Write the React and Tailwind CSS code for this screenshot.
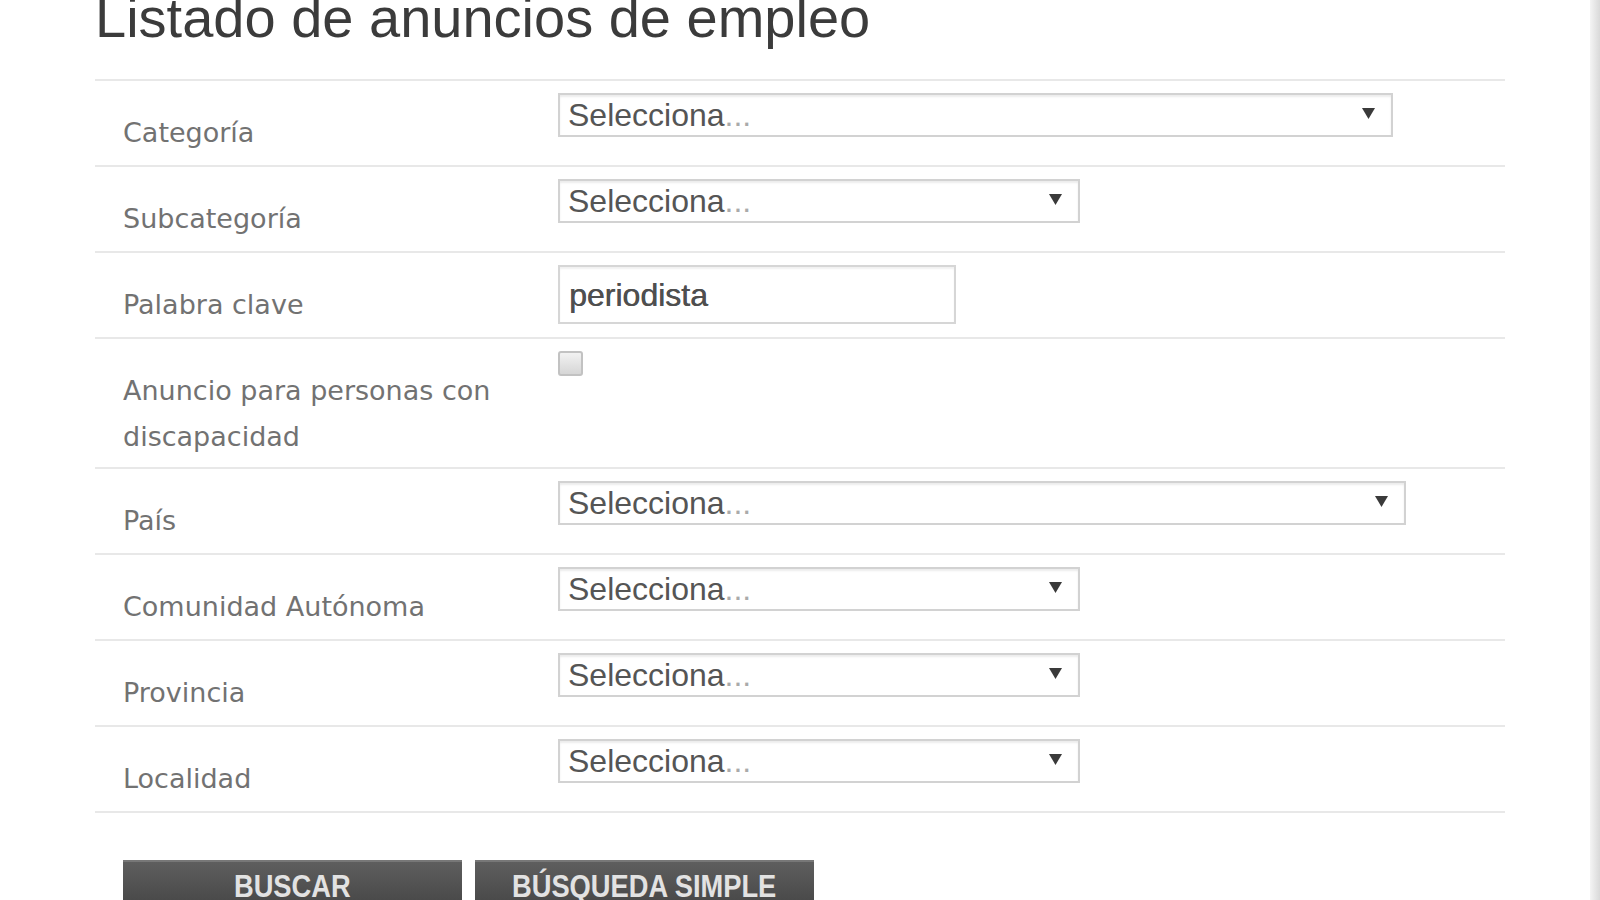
import { Fragment } from 'react'

const rows = [
    { label: 'Categoría', kind: 'select', width: 'w-[835px]' },
    { label: 'Subcategoría', kind: 'select', width: 'w-[522px]' },
    { label: 'Palabra clave', kind: 'input', width: 'w-[398px]', value: 'periodista' },
    { label: ['Anuncio para personas con', 'discapacidad'], kind: 'checkbox' },
    { label: 'País', kind: 'select', width: 'w-[848px]' },
    { label: 'Comunidad Autónoma', kind: 'select', width: 'w-[522px]' },
    { label: 'Provincia', kind: 'select', width: 'w-[522px]' },
    { label: 'Localidad', kind: 'select', width: 'w-[522px]' },
]

function FakeSelect({ width }) {
    return (
        <div className={`${width} flex h-[44px] items-center justify-between border-2 border-[#d2d2d2] bg-white pl-[8px] pr-[16px] shadow-[inset_0_2px_2px_rgba(0,0,0,0.08)]`}>
            <span className="font-['Liberation_Sans',Arial,sans-serif] text-[32px] leading-none text-[#555]">
                Selecciona<span className="text-[#aaa]">...</span>
            </span>
            <svg width="13" height="11" viewBox="0 0 13 11" className="mb-[4px]">
                <path d="M0 0h13L6.5 11z" fill="#3a3a3a" />
            </svg>
        </div>
    )
}

function Field({ row }) {
    if (row.kind === 'select') return <FakeSelect width={row.width} />
    if (row.kind === 'input') {
        return (
            <div className={`${row.width} flex h-[59px] items-center border-2 border-[#d6d6d6] bg-white pl-[9px] shadow-[inset_0_2px_2px_rgba(0,0,0,0.06)]`}>
                <span className="font-['Liberation_Sans',Arial,sans-serif] text-[32px] leading-none text-[#4f4f4f] [text-shadow:0.5px_0_0_#4f4f4f]">
                    {row.value}
                </span>
            </div>
        )
    }
    return (
        <div className="h-[25px] w-[25px] rounded-[3px] border-2 border-[#c2c2c2] bg-gradient-to-b from-[#f2f2f2] to-[#d6d6d6]" />
    )
}

export default function App() {
    return (
        <div className="flex h-screen overflow-hidden bg-white">
            <div className="flex-1 pl-[95px]">
                <h1 className="-mt-[10px] font-['Liberation_Sans',Arial,sans-serif] text-[56px] leading-[56px] text-[#3b3b3b]">
                    Listado de anuncios de empleo
                </h1>

                {/* Formulario */}
                <div className="mt-[33px] w-[1410px] border-t-2 border-[#e8e8e8]">
                    {rows.map((row, i) => (
                        <div key={i} className="flex border-b-2 border-[#e8e8e8]">
                            <div className={`w-[463px] shrink-0 pl-[28px] pt-[29px] font-['DejaVu_Sans',Verdana,sans-serif] text-[27px] leading-[46px] text-[#727272] ${Array.isArray(row.label) ? 'pb-[7px]' : 'pb-[9px]'}`}>
                                {Array.isArray(row.label)
                                    ? row.label.map((l, j) => (
                                        <Fragment key={j}>
                                            {l}
                                            {j < row.label.length - 1 && <br />}
                                        </Fragment>
                                    ))
                                    : row.label}
                            </div>
                            <div className="pt-[12px]">
                                <Field row={row} />
                            </div>
                        </div>
                    ))}
                </div>

                <div className="mt-[47px] flex gap-[13px] pl-[28px]">
                    <button className="flex h-[60px] w-[339px] items-start justify-center border-t-2 border-[#777] bg-gradient-to-b from-[#5e5e5e] to-[#404040] pt-[9px] font-['Liberation_Sans',Arial,sans-serif] text-[31px] font-bold leading-none text-[#e2e2e2]">
                        <span className="inline-block scale-x-[0.88]">BUSCAR</span>
                    </button>
                    <button className="flex h-[60px] w-[339px] items-start justify-center border-t-2 border-[#777] bg-gradient-to-b from-[#5e5e5e] to-[#404040] pt-[9px] font-['Liberation_Sans',Arial,sans-serif] text-[31px] font-bold leading-none text-[#e2e2e2]">
                        <span className="inline-block scale-x-[0.88]">BÚSQUEDA SIMPLE</span>
                    </button>
                </div>
            </div>
            <div className="w-[10px] shrink-0 bg-gradient-to-r from-[#f4f4f4] to-[#d9d9d9]" />
        </div>
    )
}
